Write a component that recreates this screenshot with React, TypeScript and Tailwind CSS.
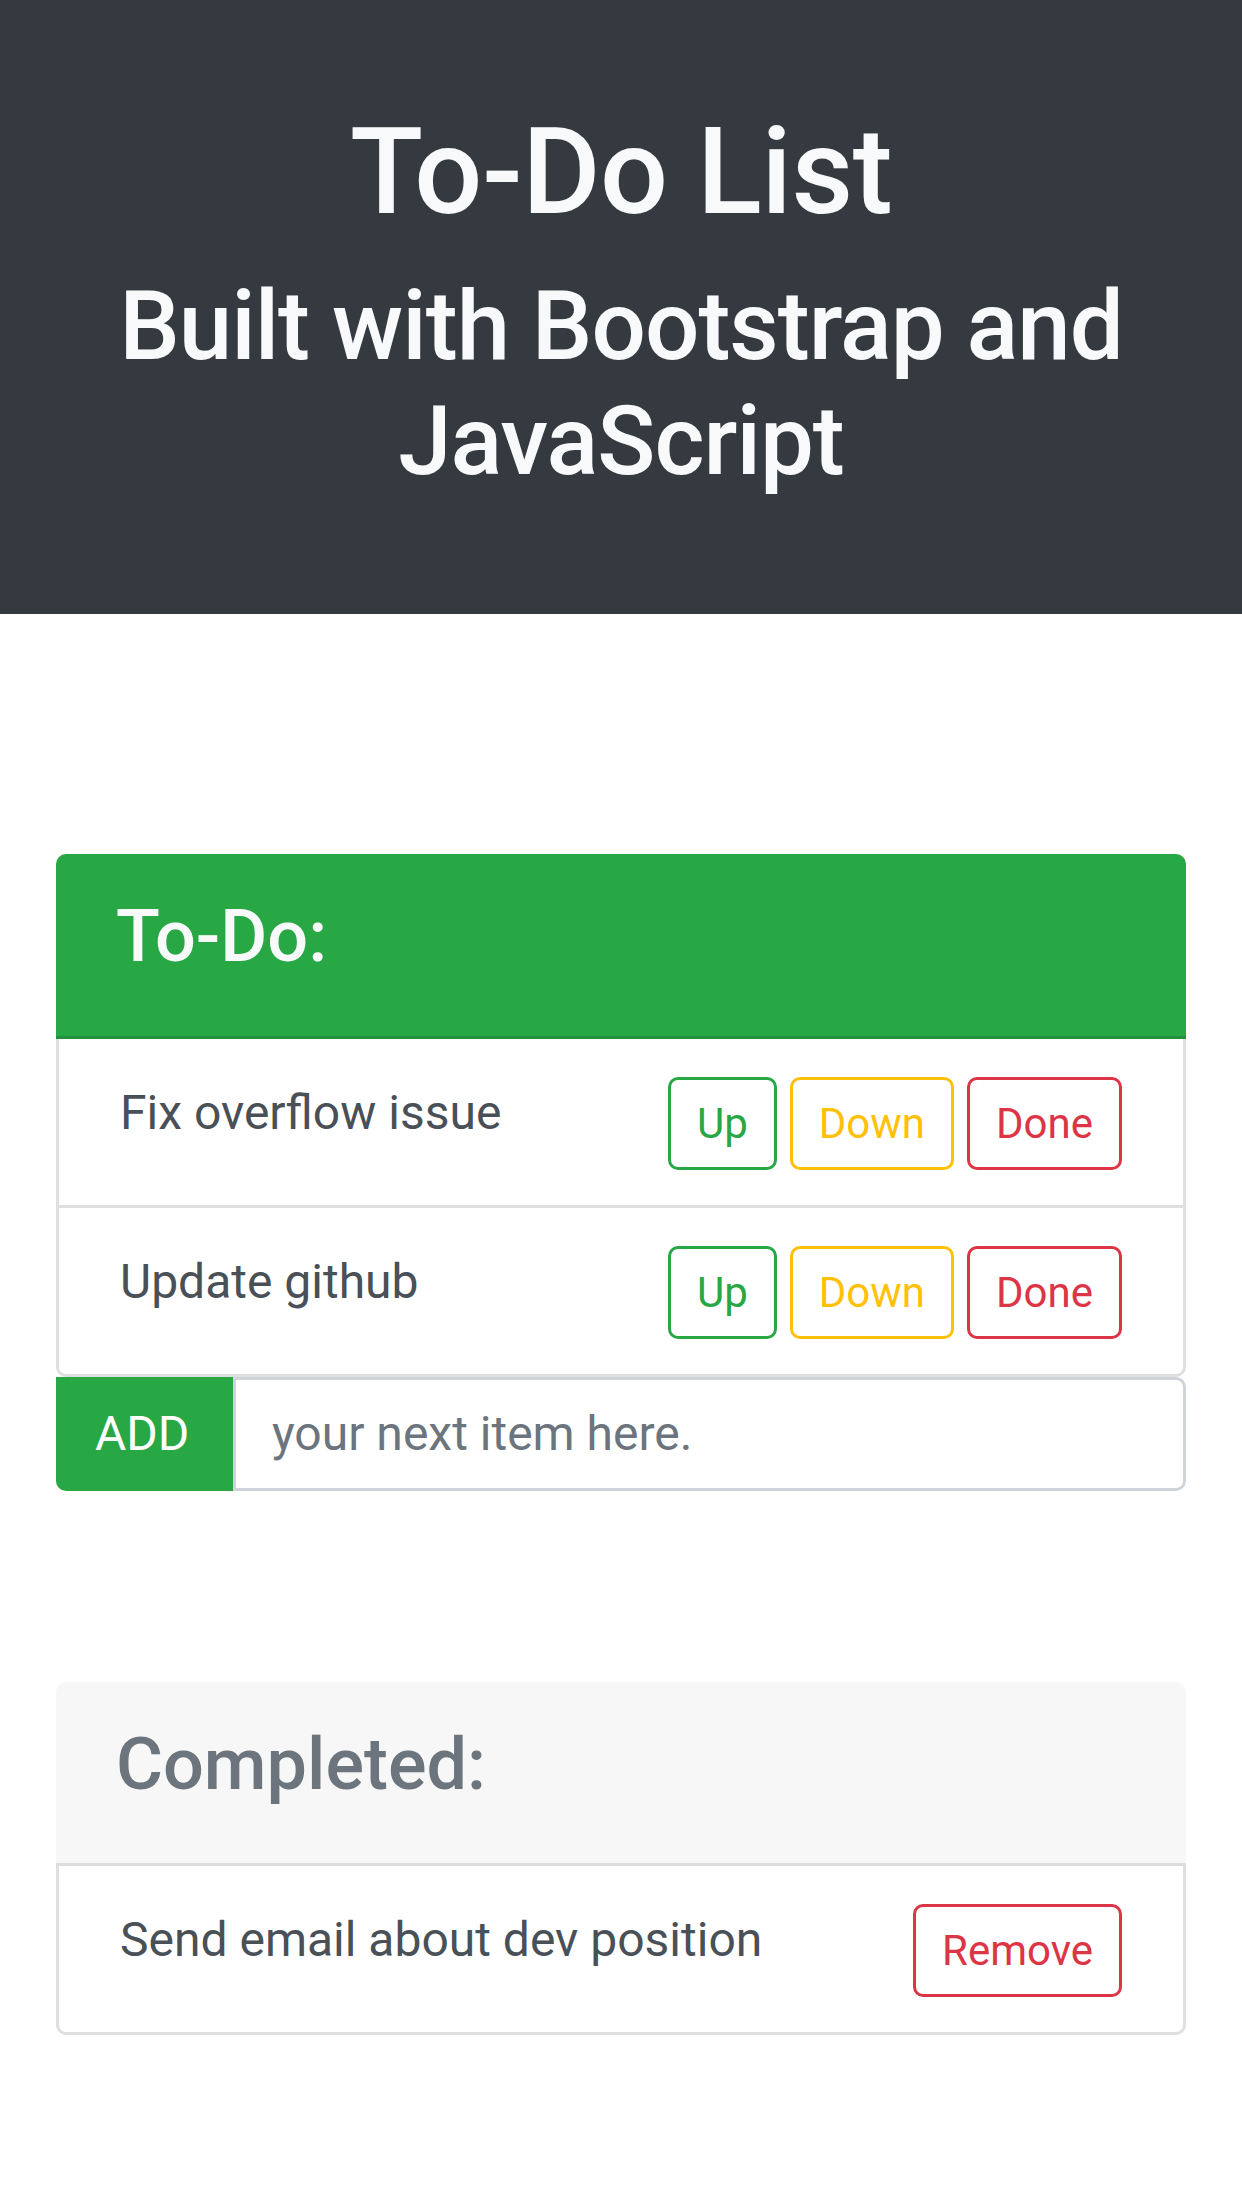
import { ReactNode } from 'react';

const font = { fontFamily: 'Roboto, "Liberation Sans", Arial, sans-serif' };

type Variant = 'success' | 'warning' | 'danger';

const variantClass: Record<Variant, string> = {
  success: 'border-[#28a745] text-[#28a745]',
  warning: 'border-[#ffc107] text-[#ffc107]',
  danger:  'border-[#dc3545] text-[#dc3545]',
};

function OutlineButton({ variant, children }: { variant: Variant; children: ReactNode }) {
  return (
    <button
      className={`h-[93px] px-[26px] border-[3px] rounded-[10px] bg-white text-[42px] leading-[63px] ${variantClass[variant]}`}
    >
      {children}
    </button>
  );
}

function ListItem({ text, children, last = false }: { text: string; children: ReactNode; last?: boolean }) {
  return (
    <li
      className={`flex items-start justify-between px-[61px] pt-[38px] pb-[35px] border-x-[3px] border-b-[3px] border-[#dfdfdf] ${
        last ? 'rounded-b-[10px]' : ''
      }`}
    >
      <span className="text-[48px] leading-[72px] text-[#495057]">{text}</span>
      <div className="flex gap-[13px]">{children}</div>
    </li>
  );
}

export default function App() {
  return (
    <div className="min-h-[2208px] w-[1242px] bg-white" style={font}>
      {/* ── Jumbotron ───────────────────────────────────────────── */}
      <header className="h-[614px] bg-[#343a40] text-[#f8f9fa] flex flex-col items-center text-center pt-[100px]">
        <h1 className="text-[120px] leading-[144px] font-medium tracking-[-0.5px]">To-Do List</h1>
        <h2 className="mt-[25px] text-[96px] leading-[115px] font-medium tracking-[-1px] px-[80px]">
          Built with Bootstrap and JavaScript
        </h2>
      </header>

      <main className="px-[56px] pt-[240px]">
        {/* ── To-Do card ─────────────────────────────────────────── */}
        <section>
          <div className="h-[185px] bg-[#28a745] rounded-t-[10px] border-b-[3px] border-[#23913c] px-[60px] pt-[40px]">
            <h3 className="text-[72px] leading-[86px] font-medium text-[#f8f9fa]">To-Do:</h3>
          </div>
          <ul>
            <ListItem text="Fix overflow issue">
              <OutlineButton variant="success">Up</OutlineButton>
              <OutlineButton variant="warning">Down</OutlineButton>
              <OutlineButton variant="danger">Done</OutlineButton>
            </ListItem>
            <ListItem text="Update github" last>
              <OutlineButton variant="success">Up</OutlineButton>
              <OutlineButton variant="warning">Down</OutlineButton>
              <OutlineButton variant="danger">Done</OutlineButton>
            </ListItem>
          </ul>
          <div className="flex h-[114px]">
            <button className="w-[177px] bg-[#28a745] text-white text-[48px] rounded-bl-[10px] text-left pl-[39px]">
              ADD
            </button>
            <input
              className="flex-1 min-w-0 border-[3px] border-[#ced4da] rounded-r-[10px] pl-[36px] text-[48px] text-[#495057] placeholder:text-[#6c757d] outline-none"
              placeholder="your next item here."
            />
          </div>
        </section>

        {/* ── Completed card ─────────────────────────────────────── */}
        <section className="mt-[191px]">
          <div className="h-[184px] bg-[#f7f7f7] rounded-t-[10px] border-b-[3px] border-[#dcdcdc] px-[60px] pt-[40px]">
            <h3 className="text-[72px] leading-[86px] font-medium text-[#6c757d]">Completed:</h3>
          </div>
          <ul>
            <ListItem text="Send email about dev position" last>
              <OutlineButton variant="danger">Remove</OutlineButton>
            </ListItem>
          </ul>
        </section>
      </main>
    </div>
  );
}
